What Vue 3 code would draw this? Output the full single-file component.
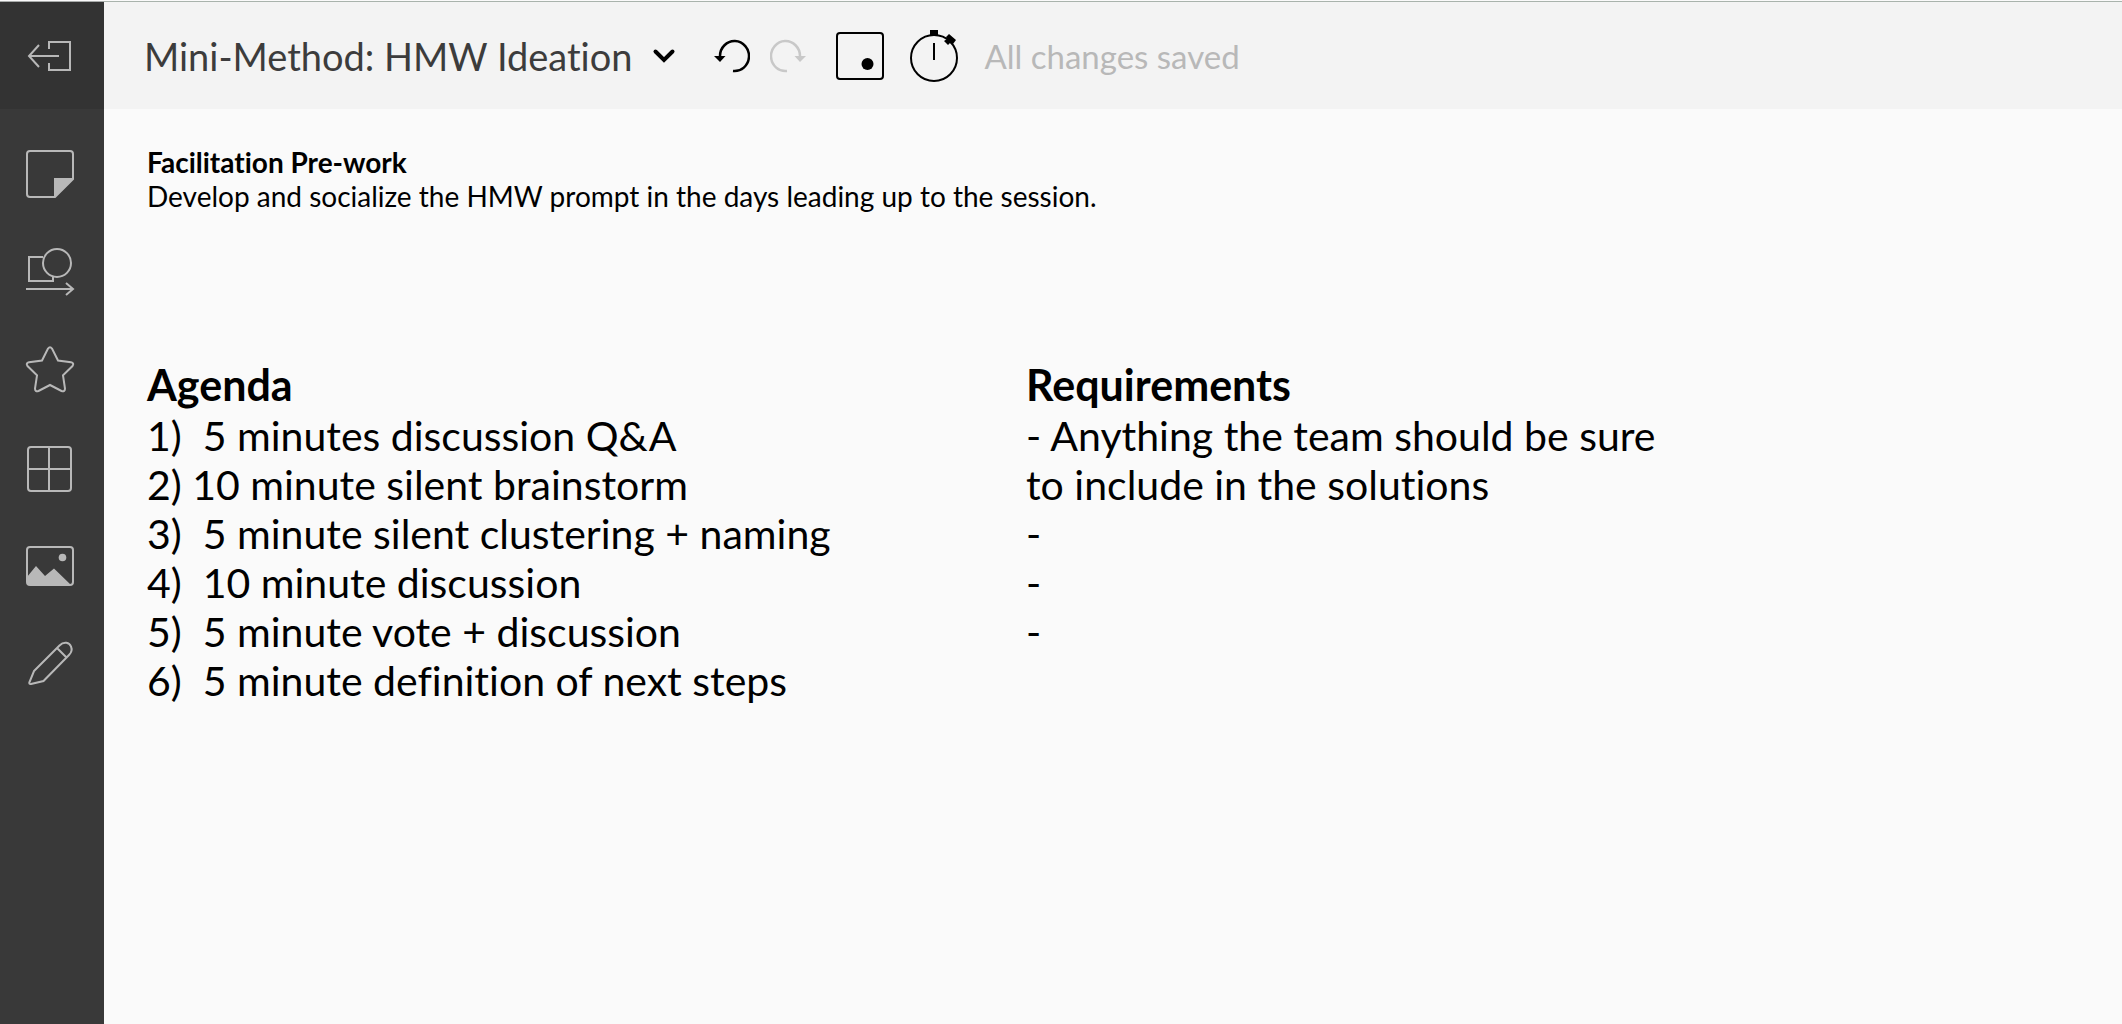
<script setup>
const tools = ['Sticky note', 'Shapes and connectors', 'Icons', 'Frameworks', 'Images', 'Draw']

const agenda = [
  '1)  5 minutes discussion Q&A',
  '2) 10 minute silent brainstorm',
  '3)  5 minute silent clustering + naming',
  '4)  10 minute discussion',
  '5)  5 minute vote + discussion',
  '6)  5 minute definition of next steps',
]

const requirements = ['- Anything the team should be sure to include in the solutions', '-', '-', '-']
</script>

<template>
  <div class="app">
    <aside class="sidebar">
      <button class="exit" type="button" aria-label="Exit">
        <svg class="icon" width="48" height="48" viewBox="0 0 48 48">
          <path d="M33 24H3M13 13L3 24l10 11M23 17v-7h21v28H23v-7" />
        </svg>
      </button>
      <nav class="tools">
        <button v-for="(tool, i) in tools" :key="tool" class="tool" type="button" :aria-label="tool">
          <svg class="icon" width="48" height="48" viewBox="0 0 48 48">
            <template v-if="i === 0">
              <path d="M4 1h40a3 3 0 0 1 3 3v25L29 47H4a3 3 0 0 1-3-3V4a3 3 0 0 1 3-3z" />
              <path class="solid" d="M28 28h20L28 48z" />
            </template>
            <template v-else-if="i === 1">
              <path d="M17 9H3v24h24v-5" />
              <circle cx="31" cy="15" r="14" />
              <path d="M0 41h46M40 35l7 6-7 6" />
            </template>
            <path
              v-else-if="i === 2"
              d="M22 2.600Q24 0 26 2.600L32 14.500L45 16.300Q48.500 17 46.500 20L37 29.300L39 42.500Q39 46 35.500 45L24 39L12.500 45Q9 46 9 42.500L11 29.300L1.500 20Q-.5 17 3 16.300L16 14.500z"
            />
            <template v-else-if="i === 3">
              <rect x="2" y="3" width="43" height="44" rx="3" />
              <path d="M23 3v44M2 25h43" />
            </template>
            <template v-else-if="i === 4">
              <rect x="1" y="5" width="46" height="38" rx="3" />
              <circle class="solid" cx="36.500" cy="15.500" r="3.800" />
              <path class="solid" d="M1 35L10 24l9 10 9-7.500L45 43H4q-3 0-3-3z" />
            </template>
            <path
              v-else
              d="M8 31L33.500 5.500C38 1 43.500 2.500 45 6.500 46.500 10 45 13 43 15L17.500 41L5 44Q3 44.500 3.300 42.500zM31 8l9.500 9.500"
            />
          </svg>
        </button>
      </nav>
    </aside>

    <div class="workspace">
      <header class="topbar">
        <button class="title" type="button">
          Mini-Method: HMW Ideation
          <svg width="24" height="16" viewBox="0 0 24 16">
            <path d="M3.500 3.500L12 12l8.500-8.500" fill="none" stroke="#000" stroke-width="4" stroke-linecap="round" />
          </svg>
        </button>
        <div class="actions">
          <button class="history" type="button" aria-label="Undo">
            <svg width="36" height="36" viewBox="0 0 36 36">
              <path d="M6 18A14.500 15 0 1 1 19 33" fill="none" stroke="currentColor" stroke-width="2.500" />
              <path d="M0 18h11.500L6 24z" fill="currentColor" />
            </svg>
          </button>
          <button class="history redo" type="button" aria-label="Redo" disabled>
            <svg width="36" height="36" viewBox="0 0 36 36">
              <path d="M30 18A14.500 15 0 1 0 17 33" fill="none" stroke="currentColor" stroke-width="2.500" />
              <path d="M36 18H24.500L30 24z" fill="currentColor" />
            </svg>
          </button>
        </div>
        <div class="session">
          <button type="button" aria-label="Voting">
            <svg width="48" height="52" viewBox="0 0 48 52">
              <rect x="1" y="3" width="46" height="46" rx="3" fill="none" stroke="#000" stroke-width="2" />
              <circle cx="31.500" cy="34" r="6" />
            </svg>
          </button>
          <button type="button" aria-label="Timer">
            <svg width="48" height="52" viewBox="0 0 48 52">
              <circle cx="24" cy="28" r="23" fill="none" stroke="#000" stroke-width="2" />
              <path d="M20 0h8v6h-8z" />
              <path d="M24 13v17" stroke="#000" stroke-width="2" />
              <path d="M39 4l7 6-3 4-3-1-2 2-4-4 3-2-1-2z" />
            </svg>
          </button>
        </div>
        <span class="status">All changes saved</span>
      </header>

      <main class="canvas">
        <section class="prework">
          <h2>Facilitation Pre-work</h2>
          <p>Develop and socialize the HMW prompt in the days leading up to the session.</p>
        </section>
        <div class="columns">
          <section>
            <h2>Agenda</h2>
            <ul>
              <li v-for="item in agenda" :key="item">{{ item }}</li>
            </ul>
          </section>
          <section class="requirements">
            <h2>Requirements</h2>
            <ul>
              <li v-for="(item, i) in requirements" :key="i">{{ item }}</li>
            </ul>
          </section>
        </div>
      </main>
    </div>
  </div>
</template>

<style>
body {
  margin: 0;
}
</style>

<style scoped>
.app {
  display: flex;
  box-sizing: border-box;
  min-height: 100vh;
  padding-top: 1px;
  background: #fafafa;
  color: #000;
  font-family: Lato, "Open Sans", sans-serif;
  font-variant-ligatures: none;
}

button {
  display: flex;
  align-items: center;
  justify-content: center;
  margin: 0;
  padding: 0;
  border: 0;
  background: none;
  color: inherit;
  font: inherit;
}

svg {
  display: block;
  flex: none;
}

.sidebar {
  flex: none;
  width: 104px;
  border-top: 1px solid #a9acab;
  box-sizing: border-box;
  background: #393939;
}

.exit,
.tool {
  width: 100%;
  padding-right: 4px;
}

.exit {
  height: 107px;
  background: #333;
}

.tools {
  padding-top: 16px;
}

.tool {
  height: 98px;
}

.icon {
  overflow: visible;
  fill: none;
  stroke: #b8b8b8;
  stroke-width: 2;
}

.icon .solid {
  fill: #b8b8b8;
  stroke: none;
}

.workspace {
  flex: 1;
  min-width: 0;
}

.topbar {
  display: flex;
  align-items: center;
  height: 107px;
  padding-left: 40px;
  border-top: 1px solid #a9b3ac;
  background: #f3f3f3;
}

.title {
  gap: 20px;
  color: #3c3c3c;
  font-size: 38px;
  line-height: 48px;
  white-space: nowrap;
}

.actions {
  display: flex;
  gap: 20px;
  margin-left: 38px;
}

.redo {
  color: #c8c8c8;
}

.session {
  display: flex;
  gap: 26px;
  margin-left: 30px;
}

.status {
  margin-left: 26px;
  color: #b8b8b8;
  font-size: 33px;
  line-height: 36px;
  white-space: nowrap;
}

.canvas {
  padding: 36px 43px;
}

h2,
p,
ul {
  margin: 0;
  padding: 0;
  list-style: none;
}

.prework {
  font-size: 28px;
  line-height: 34px;
}

.prework h2 {
  font-size: 28px;
}

.columns {
  display: grid;
  grid-template-columns: minmax(0, 879fr) minmax(0, 1053fr);
  margin-top: 147px;
  font-size: 41px;
  line-height: 49px;
}

.columns h2 {
  margin-bottom: 2px;
  font-size: 43px;
}

.columns li {
  white-space: pre-wrap;
}

.requirements {
  max-width: 660px;
}
</style>
